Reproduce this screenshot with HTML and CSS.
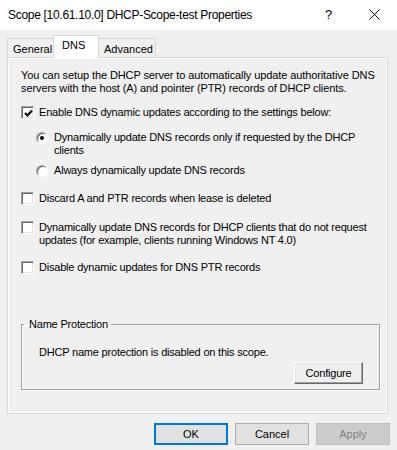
FILE: index.html
```html
<!DOCTYPE html>
<html>
<head>
<meta charset="utf-8">
<link rel="stylesheet" href="styles.css">
</head>
<body>
<div class="window">
  <div class="titlebar">
    <span class="title">Scope [10.61.10.0] DHCP-Scope-test Properties</span>
    <span class="help">?</span>
    <span class="close"><svg width="11" height="11" viewBox="0 0 11 11"><path d="M0.5 0.5 L10.5 10.5 M10.5 0.5 L0.5 10.5" stroke="#000" stroke-width="1" fill="none"/></svg></span>
  </div>
  <div class="tabs">
    <div class="tab">General</div>
    <div class="tab active">DNS</div>
    <div class="tab">Advanced</div>
  </div>
  <div class="panel">
    <p class="intro">You can setup the DHCP server to automatically update authoritative DNS servers with the host (A) and pointer (PTR) records of DHCP clients.</p>
    <label class="opt first"><span class="cb checked"><svg width="9" height="9" viewBox="0 0 9 9"><path d="M1 4 L3.5 6.5 L8 1.5" stroke="#000" stroke-width="2" fill="none"/></svg></span><span class="lbl">Enable DNS dynamic updates according to the settings below:</span></label>
    <div class="radios">
      <label class="opt r1"><span class="rb on"><span class="dot"></span></span><span class="lbl">Dynamically update DNS records only if requested by the DHCP clients</span></label>
      <label class="opt r2"><span class="rb"></span><span class="lbl">Always dynamically update DNS records</span></label>
    </div>
    <label class="opt discard"><span class="cb"></span><span class="lbl">Discard A and PTR records when lease is deleted</span></label>
    <label class="opt dyn2"><span class="cb"></span><span class="lbl">Dynamically update DNS records for DHCP clients that do not request updates (for example, clients running Windows NT 4.0)</span></label>
    <label class="opt disable"><span class="cb"></span><span class="lbl">Disable dynamic updates for DNS PTR records</span></label>
    <fieldset class="group">
      <legend>Name Protection</legend>
      <div class="gtext">DHCP name protection is disabled on this scope.</div>
      <div class="grow"><button class="classic">Configure</button></div>
    </fieldset>
  </div>
  <div class="buttons">
    <button class="btn default">OK</button>
    <button class="btn">Cancel</button>
    <button class="btn disabled">Apply</button>
  </div>
</div>
</body>
</html>
```
FILE: styles.css
```css
html, body {
  margin: 0;
  padding: 0;
  background: #f0f0f0;
}
body {
  font-family: "Liberation Sans", Arial, sans-serif;
  font-size: 11px;
  letter-spacing: -0.2px;
  color: #000;
  width: 397px;
  height: 450px;
  overflow: hidden;
}
.window {
  display: flex;
  flex-direction: column;
}
.titlebar {
  height: 30px;
  background: #fff;
  display: flex;
  align-items: center;
  padding-left: 8px;
}
.title {
  font-size: 12px;
  letter-spacing: -0.3px;
  flex: 1;
  padding-bottom: 1px;
}
.help {
  font-size: 13px;
  width: 10px;
  margin-right: 34px;
  padding-bottom: 2px;
}
.close {
  width: 11px;
  height: 11px;
  margin-right: 17px;
  margin-bottom: 2px;
  display: flex;
}
.tabs {
  display: flex;
  align-items: flex-end;
  margin-top: 5px;
  margin-left: 7px;
  height: 23px;
  margin-bottom: -1px;
  position: relative;
  z-index: 1;
}
.tab {
  height: 19px;
  box-sizing: border-box;
  border: 1px solid #d9d9d9;
  border-bottom: none;
  background: #f0f0f0;
  padding: 3px 5px 0 5px;
  line-height: 14px;
  margin-bottom: 1px;
  letter-spacing: 0;
}
.tab:first-child {
  width: 47px;
}
.tab:last-child {
  width: 57px;
  border-left: none;
}
.tab.active {
  height: 23px;
  width: 46px;
  background: #fff;
  padding: 2px 0 0 8px;
  margin-bottom: 0;
  margin-left: -1px;
  border-bottom: none;
}
.panel {
  margin: 0 9px 0 7px;
  height: 357px;
  box-sizing: border-box;
  border: 1px solid #d9d9d9;
  box-shadow: inset 1px 1px 0 #fff, inset -1px -1px 0 #fff;
  background: #f0f0f0;
  padding: 11px 7px 0 13px;
  display: flex;
  flex-direction: column;
}
.intro {
  margin: 0;
  line-height: 13px;
  letter-spacing: -0.1px;
}
.opt {
  display: flex;
  align-items: flex-start;
  line-height: 13px;
}
.opt .lbl {
  flex: 1;
}
.cb {
  width: 13px;
  height: 13px;
  box-sizing: border-box;
  flex: none;
  border: 1px solid;
  border-color: #a0a0a0 #fff #fff #a0a0a0;
  box-shadow: inset 1px 1px 0 #696969, inset -1px -1px 0 #e3e3e3;
  background: #fff;
  margin-right: 5px;
  display: flex;
  align-items: center;
  justify-content: center;
}
.cb svg {
  margin-left: 1px;
  margin-top: 1px;
}
.rb {
  width: 12px;
  height: 12px;
  box-sizing: border-box;
  flex: none;
  border-radius: 50%;
  border: 1px solid;
  border-color: #a0a0a0 #fff #fff #a0a0a0;
  box-shadow: inset 1px 1px 0 #696969;
  background: #fff;
  margin-right: 6px;
  margin-top: 1px;
  display: flex;
  align-items: center;
  justify-content: center;
}
.dot {
  width: 4px;
  height: 4px;
  border-radius: 50%;
  background: #000;
}
.first { margin-top: 11px; }
.radios {
  margin-left: 15px;
  padding-right: 25px;
}
.r1 { margin-top: 12px; }
.r2 { margin-top: 7px; }
.discard { margin-top: 15px; }
.dyn2 { margin-top: 16px; }
.disable { margin-top: 14px; }
.group {
  margin: 44px 0 0 0;
  border: 1px solid #a0a0a0;
  box-shadow: inset 1px 1px 0 #fff, 1px 1px 0 #fff;
  padding: 14px 16px 5px 17px;
  min-inline-size: 0;
}
.group legend {
  padding: 0 3px 0 5px;
  margin-left: -15px;
  line-height: 13px;
}
.gtext {
  line-height: 13px;
  margin-top: 1px;
}
.grow {
  display: flex;
  justify-content: flex-end;
  margin-top: 3px;
}
.classic {
  font-family: "Liberation Sans", Arial, sans-serif;
  font-size: 11px;
  letter-spacing: -0.2px;
  color: #000;
  width: 69px;
  height: 22px;
  box-sizing: border-box;
  background: #f0f0f0;
  border: 1px solid;
  border-color: #fff #696969 #696969 #fff;
  box-shadow: inset -1px -1px 0 #a0a0a0, inset 1px 1px 0 #e3e3e3;
  padding: 0;
}
.buttons {
  display: flex;
  justify-content: flex-end;
  gap: 7px;
  margin-top: 9px;
  padding-right: 7px;
}
.btn {
  font-family: "Liberation Sans", Arial, sans-serif;
  font-size: 11px;
  color: #000;
  width: 74px;
  height: 22px;
  box-sizing: border-box;
  background: #e1e1e1;
  border: 1px solid #adadad;
  padding: 0;
}
.btn.default {
  border: 2px solid #0078d7;
}
.btn.disabled {
  background: #cccccc;
  border-color: #bfbfbf;
  color: #838383;
}
```
